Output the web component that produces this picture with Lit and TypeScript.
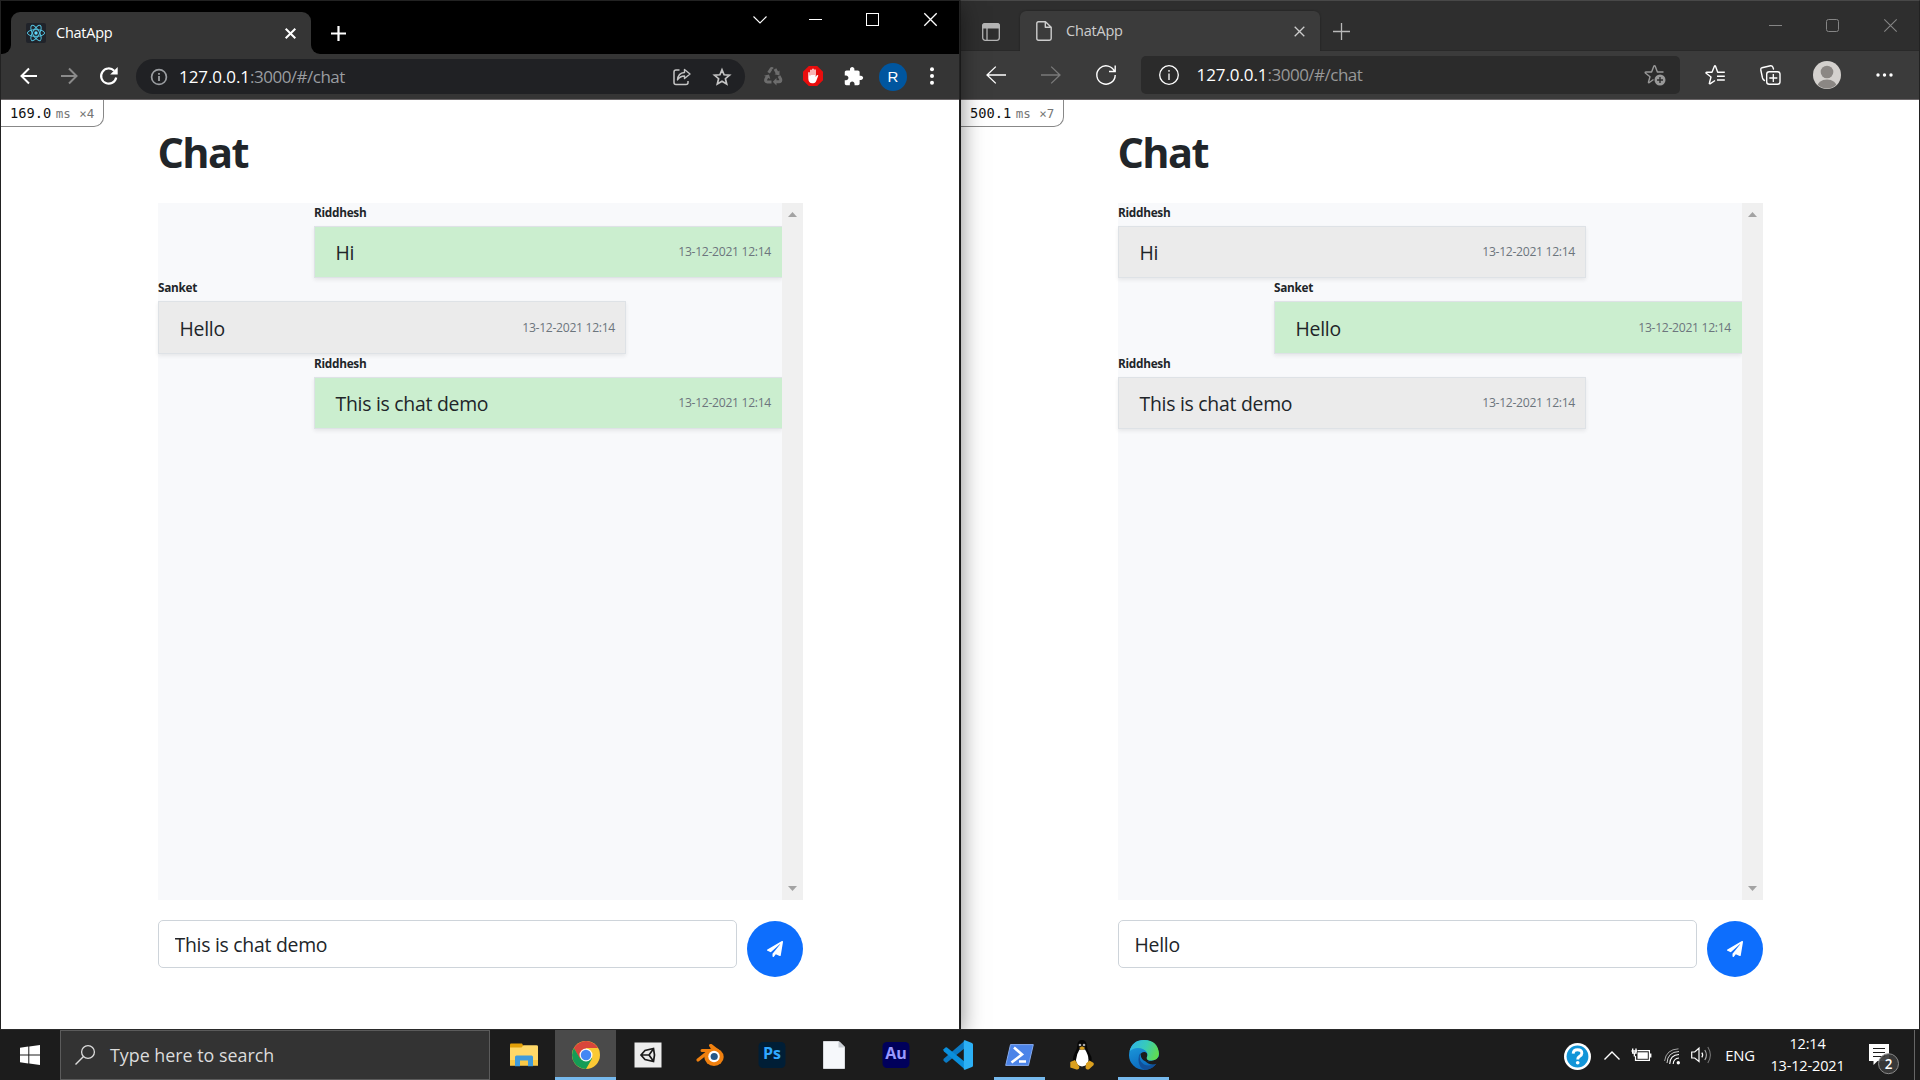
import { LitElement, html, svg, css } from "lit";
import { customElement, property } from "lit/decorators.js";
import { classMap } from "lit/directives/class-map.js";

const icon = (w: number, h: number, body: unknown) =>
  html`<svg width=${w} height=${h} viewBox="0 0 ${w} ${h}" fill="none" stroke="currentColor">${body}</svg>`;

const closeIcon = (s: number, sw: number) =>
  icon(s, s, svg`<path stroke-width=${sw} d="M.7 .7L${s - 0.7} ${s - 0.7}M${s - 0.7} .7L.7 ${s - 0.7}"/>`);
const plusIcon = (s: number, sw: number) =>
  icon(s, s, svg`<path stroke-width=${sw} d="M${s / 2} 0V${s}M0 ${s / 2}H${s}"/>`);

const reactIcon = html`<svg width="20" height="20" viewBox="0 0 20 20">
  <rect width="20" height="20" rx="2" fill="#20232a"/>
  <g fill="none" stroke="#53c1de" stroke-width="1">
    <ellipse cx="10" cy="10" rx="8.6" ry="3.4"/>
    <ellipse cx="10" cy="10" rx="8.6" ry="3.4" transform="rotate(60 10 10)"/>
    <ellipse cx="10" cy="10" rx="8.6" ry="3.4" transform="rotate(120 10 10)"/>
  </g><circle cx="10" cy="10" r="1.7" fill="#61dafb"/></svg>`;

const chromeIcons = {
  back: icon(18, 18, svg`<path stroke-width="2" d="M17 9H2M9 1.5L1.5 9L9 16.5"/>`),
  forward: icon(18, 18, svg`<path stroke-width="2" d="M1 9H16M9 1.5L16.5 9L9 16.5"/>`),
  reload: icon(20, 20, svg`<path stroke-width="2.2" d="M17.2 11.5A7.6 7.6 0 1 1 15.2 4.8"/><path fill="currentColor" stroke="none" d="M18.7 1V8.5H11.2Z"/>`),
  info: icon(18, 18, svg`<circle cx="9" cy="9" r="7.4" stroke-width="1.7"/><path stroke-width="1.8" d="M9 8V13M9 5V6.8"/>`),
  share: icon(18, 18, svg`<path stroke-width="1.5" d="M6.5 2H3Q1 2 1 4V14.500Q1 16.500 3 16.500H13Q15 16.500 15 14.500V13"/><path stroke-width="1.400" stroke-linejoin="round" d="M11.500 1.500L17 6L11.500 10.500V8Q7 8 4.500 12Q5 5 11.500 4.500Z"/>`),
  star: icon(18, 18, svg`<path stroke-width="1.7" d="M9 1.800L11.100 6.800L16.500 7.200L12.400 10.700L13.700 16L9 13.200L4.300 16L5.600 10.700L1.500 7.200L6.900 6.800Z"/>`),
  recycle: icon(20, 20, svg`<g stroke-width="3"><path d="M5.600 6.800L8 3Q8.800 2 9.600 3"/><path d="M12 3L14.200 7"/><path d="M16 10L17.700 13.200Q18.300 15.800 16 15.800H12.500"/><path d="M8.500 16H4.300Q1.700 15.800 3 12.600L4.700 10"/></g><g fill="currentColor" stroke="none"><path d="M16.500 4.500V9.500L11.500 8.200Z"/><path d="M13.500 12V19.500L9.800 15.800Z"/><path d="M1 9.800L6 8.500L7.300 13Z"/></g>`),
  hand: html`<svg width="22" height="22" viewBox="0 0 22 22"><path fill="#e90d0d" d="M6.800 1H15.200L21 6.800V15.200L15.200 21H6.800L1 15.200V6.800Z"/>
    <path fill="#fff" d="M6.300 7.500Q7 6.600 7.700 7.500V10.500H8.300V5Q9 4 9.700 5V10H10.300V4Q11 3.100 11.700 4V10H12.300V4.700Q13 3.800 13.700 4.700V12L14.800 10.300Q15.800 9.500 16.300 10.500L14.600 15Q13.500 18.300 11.300 18.300H10.300Q6.400 18 6.300 13.500Z"/></svg>`,
  puzzle: html`<svg width="21" height="21" viewBox="0 0 24 24"><path fill="#fff" d="M20.500 11H19V7c0-1.100-.9-2-2-2h-4V3.500C13 2.120 11.880 1 10.500 1S8 2.120 8 3.500V5H4c-1.100 0-1.990.9-1.990 2v3.800H3.500c1.490 0 2.700 1.210 2.700 2.700s-1.210 2.700-2.700 2.700H2V20c0 1.100.9 2 2 2h3.800v-1.500c0-1.490 1.210-2.700 2.700-2.700 1.490 0 2.700 1.210 2.700 2.700V22H17c1.100 0 2-.9 2-2v-4h1.500c1.380 0 2.500-1.120 2.500-2.500S21.880 11 20.500 11z"/></svg>`,
  dots: html`<svg width="4" height="18" viewBox="0 0 4 18" fill="#fff"><circle cx="2" cy="2.300" r="2"/><circle cx="2" cy="9" r="2"/><circle cx="2" cy="15.700" r="2"/></svg>`,
};

const edgeIcons = {
  tabs: html`<svg width="18" height="18" viewBox="0 0 18 18" fill="none" stroke="#b4b4b4" stroke-width="1.300"><rect x=".7" y=".7" width="16.600" height="16.600" rx="2.500"/><path d="M5 5V17"/><path fill="#b4b4b4" stroke="none" d="M0 5.500V3Q0 0 3 0H15Q18 0 18 3V5.500Z"/></svg>`,
  page: icon(16, 20, svg`<path stroke-width="1.400" stroke-linejoin="round" d="M2.500 .8H9.500L15.200 6.300V17.500Q15.200 19.200 13.500 19.200H2.500Q.8 19.200 .8 17.500V2.500Q.8 .8 2.500 .8ZM9.300 1V6.300H15"/>`),
  back: icon(20, 18, svg`<path stroke-width="1.300" d="M20 9H1.200M9.800 .6L1 9L9.800 17.400"/>`),
  forward: icon(20, 18, svg`<path stroke-width="1.300" d="M0 9H18.800M10.200 .6L19 9L10.200 17.400"/>`),
  reload: icon(20, 20, svg`<path stroke-width="1.400" d="M18.700 7A9.200 9.200 0 1 0 19.200 10M19.200 .5V6.500H13"/>`),
  info: icon(20, 20, svg`<circle cx="10" cy="10" r="9.300" stroke-width="1.300"/><path stroke-width="1.300" d="M10 8.500V15M10 5V6.800"/>`),
  starPlus: icon(22, 22, svg`<path stroke-width="1.400" stroke-linejoin="round" d="M9.500 15.500L5 18.800Q4.200 19 4.500 18L6 12.700L1.300 9Q.8 8 2 8H7.600L9.800 2.200Q10.500 1 11.200 2.200L13.400 8H19.500"/><circle cx="16" cy="16" r="5.500" fill="currentColor" stroke="none"/><path stroke="#2b2b2b" stroke-width="1.400" d="M16 13V19M13 16H19"/>`),
  starList: icon(20, 20, svg`<path stroke-width="1.400" stroke-linejoin="round" d="M10 15.500L5 18.900Q4 19 4.400 18L6 12L1.200 8.300Q.5 7.200 1.800 7.200H7L9.300 1.400Q10 .2 10.600 1.400L12.700 7.200H19.800M12 11.200H19.800M12 15H19.800"/>`),
  collections: icon(21, 20, svg`<path stroke-width="1.400" stroke-linecap="round" d="M4.500 15.500Q3 14.800 2.500 13L.8 5Q.5 3.200 2 2.700L10.500 .8Q12.300 .6 12.900 2.200L13.500 4"/><rect x="6.700" y="6.700" width="13.300" height="12.600" rx="2.500" stroke-width="1.400"/><path stroke-width="1.300" d="M13.300 9V17M9.300 13H17.300"/>`),
  avatar: html`<svg width="28" height="28" viewBox="0 0 28 28"><clipPath id="av"><circle cx="14" cy="14" r="13.500"/></clipPath><circle cx="14" cy="14" r="14" fill="#d4d1ce"/><g fill="#8b8784" clip-path="url(#av)"><circle cx="14" cy="11" r="6.300"/><ellipse cx="14" cy="26.500" rx="10" ry="8"/></g></svg>`,
  dots: html`<svg width="17" height="4" viewBox="0 0 17 4" fill="#fff"><circle cx="2" cy="2" r="1.700"/><circle cx="8.500" cy="2" r="1.700"/><circle cx="15" cy="2" r="1.700"/></svg>`,
};

const caption = (name: string, sw: number, round = 0) => {
  if (name === "chevron") return icon(14, 8, svg`<path stroke-width="1.100" d="M.5 .5L7 7L13.500 .5"/>`);
  if (name === "min") return icon(13, 1, svg`<path stroke-width="1" d="M0 .5H13"/>`);
  if (name === "max") return icon(13, 13, svg`<rect x=".5" y=".5" width="12" height="12" rx=${round} stroke-width="1"/>`);
  return icon(13, 13, svg`<path stroke-width=${sw} d="M.3 .3L12.700 12.700M12.700 .3L.3 12.700"/>`);
};

const appIcons: Record<string, unknown> = {
  explorer: html`<svg width="28" height="24" viewBox="0 0 28 24"><path fill="#e3a008" d="M0 1.500Q0 .5 1 .5H12L13.500 3V6H0Z"/><path fill="#ffd868" d="M0 4.500H11.500L13.500 2.300H26.500Q28 2.300 28 3.500V22.500H0Z"/><path fill="#f9c846" d="M0 17H28V22.500H0Z"/><path fill="#3f9bdc" d="M5 23.300V14Q5 12.500 6.500 12.500H21.500Q23 12.500 23 14V23.300H18V17.500H10V23.300Z"/></svg>`,
  chrome: html`<svg width="28" height="28" viewBox="0 0 28 28"><circle cx="14" cy="14" r="14" fill="#fbc934"/><path fill="#d9463b" d="M14 14L7.500 17.700L1.900 7A14 14 0 0 1 26.100 7H14Z"/><path fill="#149c56" d="M1.900 7A14 14 0 0 0 14 28L20 17.500L14 14L8 17.500Z"/><circle cx="14" cy="14" r="6.500" fill="#fff" opacity=".95"/><circle cx="14" cy="14" r="5.200" fill="#4487f4"/></svg>`,
  unity: html`<svg width="28" height="26" viewBox="0 0 28 26"><path fill="#ececec" d="M.5 .5H27.500V25.500H.5Z"/><path d="M7 13L11 8.500L19.500 6.500L20.500 13L19.500 19.500L11 17.500ZM15 13H7.500M15 13L19.300 7M15 13L19.300 19" fill="none" stroke="#1a1a1a" stroke-width="1.700"/></svg>`,
  blender: html`<svg width="28" height="24" viewBox="0 0 28 24"><g fill="none" stroke="#f0800f" stroke-linecap="round" stroke-linejoin="round"><path stroke-width="3.200" d="M2 17L12 9"/><path stroke-width="3" d="M6 7.500H18L14.500 2.500"/><path stroke-width="3" d="M15 2.500L22 8"/></g><ellipse cx="18" cy="14" rx="9.700" ry="9" fill="#f0800f"/><circle cx="18" cy="13.500" r="5.700" fill="#fff"/><circle cx="18.200" cy="13.500" r="3.600" fill="#265787"/></svg>`,
  ps: html`<svg width="28" height="28" viewBox="0 0 28 28"><rect x=".5" y="1" width="27" height="26" rx="4.500" fill="#001e36"/><text x="14" y="18" text-anchor="middle" font-family="Open Sans, sans-serif" font-weight="700" font-size="16" fill="#31a8ff">Ps</text></svg>`,
  file: html`<svg width="22" height="28" viewBox="0 0 22 28"><path fill="#f6f8fb" stroke="#d8dade" d="M.5 .5H16L21.500 6V27.500H.5Z"/><path fill="#c9cdd3" d="M15.500 0V6.500H22Z"/></svg>`,
  au: html`<svg width="28" height="28" viewBox="0 0 28 28"><rect x=".5" y="1" width="27" height="26" rx="4.500" fill="#00005b"/><text x="14" y="18" text-anchor="middle" font-family="Open Sans, sans-serif" font-weight="700" font-size="16" fill="#9999ff">Au</text></svg>`,
  vscode: html`<svg width="30" height="30" viewBox="0 0 30 30"><path fill="#0b7ac4" d="M1 18.500L22 .5V8L4 22.500Q3.300 23 2.500 22.500L.6 20.800Q-.2 19.800 1 18.500Z"/><path fill="#0a8fdc" d="M1 11.500L22 29.500V22L4 7.500Q3.300 7 2.500 7.500L.6 9.200Q-.2 10.200 1 11.500Z"/><path fill="#2cb0f5" d="M22 .2L29 3Q30 3.500 30 4.500V25.500Q30 26.500 29 27L22 29.800Q20.500 30 20.800 28.500V1.500Q20.500 0 22 .2Z"/></svg>`,
  powershell: html`<svg width="29" height="22" viewBox="0 0 29 22"><path fill="#4c84e8" stroke="#86abee" stroke-width="1" d="M5.500 .6H28.300L23.500 21.400H.7Z"/><path fill="none" stroke="#fff" stroke-width="2.600" d="M9 3.500L17 10.500L6.500 18.500M14 17.500H21"/></svg>`,
  tux: html`<svg width="24" height="30" viewBox="0 0 24 30"><path fill="#060606" d="M12 0Q16.500 0 16.800 5.500Q17 9.500 20 14Q23 19 20.500 24Q12 28 4 24Q1.500 19 4.500 13.500Q7.500 9 7.300 5.500Q7.500 0 12 0Z"/><path fill="#fff" d="M9.500 9.500H15Q18.500 15 18.500 20Q18.500 25.500 12 26.500Q6 25.500 6 20Q6.500 14 9.500 9.500Z"/><circle cx="10" cy="5" r="1.300" fill="#aaa"/><circle cx="14" cy="5" r="1.300" fill="#aaa"/><path fill="#dba01f" d="M9 8L12 6.300L15.300 8L12 10.200ZM.3 22L5 20L9.500 27Q9 30 6.500 29.500L.3 27.500ZM23.700 23L19.500 20.500L16 23.500L15.500 28Q17 30.500 19.300 29L23.700 25Z"/></svg>`,
  edge: html`<svg width="30" height="30" viewBox="0 0 30 30"><defs>
      <linearGradient id="e1" x1="0" y1=".3" x2="1" y2=".6"><stop offset="0" stop-color="#2fb5e8"/><stop offset=".5" stop-color="#38cbb9"/><stop offset="1" stop-color="#62dd4b"/></linearGradient>
      <linearGradient id="e2" x1="0" y1="0" x2=".4" y2="1"><stop offset="0" stop-color="#1ea3e2"/><stop offset="1" stop-color="#0c69bd"/></linearGradient></defs>
    <circle cx="15" cy="15" r="15" fill="url(#e2)"/>
    <path fill="#11509a" d="M11.500 13Q9 21 15 24.500Q20 27 27.500 23.500Q23 30 15.500 30Q9.500 27 9.500 20Q9.500 15 11.500 13Z"/>
    <path fill="#1c1c1c" d="M30.200 16V22.500L28 23.800Q20 26 16 20.500Q17.500 21.500 22 21Q28 20 30.200 16Z"/>
    <path fill="#1c1c1c" d="M11.500 14Q13 11.500 16 12Q19 13 18.300 16Q17 18.500 19 20Q21 21 17 21.500Q12 20 11.500 14Z"/>
    <path fill="url(#e1)" d="M.5 11.500Q3 0 15 0Q29 0 30 14Q29 20.500 22.500 20.500Q17.500 20.500 17.700 18Q19.500 15.500 18 12.500Q15 8 9 8Q3.500 8 .5 11.500Z"/></svg>`,
};

const trayIcons = {
  help: html`<svg width="27" height="27" viewBox="0 0 28 28"><circle cx="14" cy="14" r="14" fill="#fff"/><circle cx="14" cy="14" r="11.300" fill="#1295d8"/><path fill="none" stroke="#fff" stroke-width="3" d="M9.500 11Q9.700 7 14 7Q18.500 7 18.500 10.500Q18.500 12.500 16 14Q14.200 15.200 14.200 17"/><circle cx="14.200" cy="20.500" r="1.900" fill="#fff"/></svg>`,
  chevron: icon(16, 9, svg`<path stroke-width="1.400" d="M.5 8.500L8 1L15.500 8.500"/>`),
  battery: icon(21, 14, svg`<path stroke-width="1.200" d="M6.500 2.600H18.400V12.400H4.500V8"/><rect x="6.500" y="4.300" width="10.300" height="6.500" fill="currentColor" stroke="none"/><path stroke-width="1.400" d="M19.700 5.500V9.500M1.700 .5V5H5V.5M3.400 5V8.500M.5 3H6"/>`),
  wifi: icon(17, 17, svg`<circle cx="14.300" cy="14.700" r="1.700" fill="currentColor" stroke="none"/><path stroke-width="1.100" d="M9.200 16Q9.500 10.500 15 10"/><path stroke-width="1.100" d="M5.700 16Q6 7 15 6.500"/><path stroke-width="1" opacity=".8" d="M3 15Q3.500 4 15 3.500"/><path stroke-width="1" opacity=".6" d="M.6 13Q2 1.500 14.500 .8"/>`),
  volume: icon(21, 18, svg`<path stroke-width="1.200" d="M.7 6H3.700L8 2.200V15.500L3.700 12H.7Z"/><path stroke-width="1.200" d="M10.800 6.700Q12.500 9 10.800 11.300"/><path stroke-width="1.100" opacity=".65" d="M13.800 4Q17 9 13.800 14"/><path stroke-width="1.100" opacity=".4" d="M16.800 1Q22 9 16.800 17"/>`),
};

const base = css`
  * { box-sizing: border-box; }
  svg { display: block; flex: none; overflow: visible; }
`;

interface Message { from: string; text: string; mine: boolean; }

@customElement("chat-page")
class ChatPage extends LitElement {
  @property({ attribute: false }) messages: Message[] = [];
  @property() draft = "";
  @property() timing = "";
  @property() count = "";

  static styles = [base, css`
    :host { display: block; flex: 1; background: #fff; color: #212529; overflow: hidden; }
    .profiler { width: 103px; height: 27px; border: 1px solid #888; border-width: 0 1px 1px 0; border-radius: 0 0 10px 0;
      padding-left: 9px; display: flex; align-items: baseline; line-height: 26px; font-family: "DejaVu Sans Mono", monospace; color: #111; font-size: 13.700px; }
    .small { font-size: 12.500px; color: #757575; margin-left: 4.500px; }
    .times { margin-left: 8.500px; }
    .column { width: 645px; margin-left: 157px; }
    h1 { margin: 0 0 0 -.5px; height: 76px; line-height: 50px; font-size: 41.500px; font-weight: 700; letter-spacing: -1.600px; }
    .board { height: 697px; display: flex; background: #f8f9fb; }
    .list { flex: 1; display: flex; flex-direction: column; }
    .bar { width: 21px; background: #f0f0f0; display: flex; flex-direction: column; align-items: center; justify-content: space-between; padding: 9px 0; color: #a3a3a3; }
    .entry { width: 468px; }
    .mine { align-self: flex-end; }
    .name { height: 23px; line-height: 18px; font-size: 11.800px; font-weight: 700; letter-spacing: -.28px; }
    .bubble { height: 52.4px; padding: 1px 10px 0 20.500px; border: 1px solid #dee2e6; background: #ebebeb; box-shadow: 0 2px 4px rgba(0,0,0,.075);
      display: flex; justify-content: space-between; align-items: center; font-size: 19.400px; letter-spacing: -.26px; }
    .mine .bubble { background: #cbeecf; border-right: 0; padding-right: 11px; }
    .time { font-size: 12.200px; letter-spacing: -.32px; color: #6c757d; padding-bottom: 2px; }
    .compose { display: flex; gap: 10px; margin-top: 20px; }
    .field { flex: 1; min-width: 0; height: 48px; border: 1px solid #ced4da; border-radius: 5px; padding: 1px 15px 0 15.500px; font: 19.400px "Open Sans", sans-serif; letter-spacing: -.26px; color: #212529; background: #fff; outline: 0; }
    .send { width: 56px; height: 56px; margin-top: 1px; padding: 0; border: 0; border-radius: 50%; background: #0d6efd; display: flex; align-items: center; justify-content: center; }
  `];

  render() {
    return html`
      <div class="profiler">${this.timing}<span class="small">ms</span><span class="small times">${this.count}</span></div>
      <div class="column">
        <h1>Chat</h1>
        <div class="board">
          <div class="list">
            ${this.messages.map((m) => html`
              <div class=${classMap({ entry: true, mine: m.mine })}>
                <div class="name">${m.from}</div>
                <div class="bubble"><span>${m.text}</span><span class="time">13-12-2021 12:14</span></div>
              </div>`)}
          </div>
          <div class="bar">
            <svg width="9" height="5" viewBox="0 0 9 5" fill="currentColor"><path d="M0 5L4.500 0L9 5Z"/></svg>
            <svg width="9" height="5" viewBox="0 0 9 5" fill="currentColor"><path d="M0 0H9L4.500 5Z"/></svg>
          </div>
        </div>
        <div class="compose">
          <input class="field" .value=${this.draft}>
          <button class="send"><svg width="16" height="16" viewBox="0 0 512 512" fill="#fff"><path d="M476 3.200L12.500 270.600c-18.100 10.400-15.800 35.600 2.200 43.200L121 358.400l287.300-253.200c5.500-4.900 13.300 2.600 8.600 8.300L176 407v80.500c0 23.600 28.500 32.900 42.500 15.800L282 426l124.600 52.200c14.200 6 30.400-2.900 33-18.200l72-432C515 7.800 493.300-6.800 476 3.200z"/></svg></button>
        </div>
      </div>`;
  }
}

@customElement("chrome-frame")
class ChromeFrame extends LitElement {
  static styles = [base, css`
    :host { display: block; height: 99px; color: #fff; background: #353535; border-bottom: 1px solid #6a6668; }
    .strip { height: 53px; background: #000; display: flex; }
    .foot { width: 10px; background: #353535; display: flex; }
    .foot i { flex: 1; background: #000; }
    .left i { border-bottom-right-radius: 9px; }
    .right i { border-bottom-left-radius: 9px; }
    .tab { width: 300px; margin-top: 11px; height: 42px; background: #353535; border-radius: 9px 9px 0 0; display: flex; align-items: center; padding: 0 15px; font-size: 14.500px; letter-spacing: -.25px; }
    .title { flex: 1; padding: 0 0 2px 10px; }
    .plus { width: 30px; padding: 11px 0 0 4px; display: flex; align-items: center; justify-content: center; }
    .captions { margin-left: auto; display: flex; height: 37px; }
    .slot { width: 58px; display: flex; align-items: center; justify-content: center; }
    .chevron { width: 53px; }
    .min { width: 58px; }
    .max { width: 57px; }
    .tools { display: flex; height: 45px; align-items: center; padding: 0 0 1px 8px; }
    .tool { width: 40px; display: flex; justify-content: center; }
    .dim { color: #8a8a8a; }
    .address { width: 609px; height: 35px; margin: 1px 8px 0 7px; border-radius: 18px; background: #202124; display: flex; align-items: center; padding: 0 3px 0 13.500px; font-size: 17px; color: #9a9da1; }
    .url { flex: 1; padding-left: 11.500px; letter-spacing: -.5px; }
    .host { color: #fff; letter-spacing: -.08px; }
    .grey { color: #c4c4c4; }
    .avatar { width: 28px; height: 28px; margin: 1px 6px 0; border-radius: 50%; background: #00569f; display: flex; align-items: center; justify-content: center; font: 15px "Liberation Sans", sans-serif; }
    .faint { color: #6d6d6d; }
    .menu { width: 38px; }
  `];
  render() {
    return html`
      <div class="strip">
        <div class="foot left"><i></i></div>
        <div class="tab">${reactIcon}<span class="title">ChatApp</span>${closeIcon(11, 2)}</div>
        <div class="foot right"><i></i></div>
        <div class="plus">${plusIcon(15, 2.2)}</div>
        <div class="captions">
          ${["chevron", "min", "max", "close"].map((c) => html`<span class="slot ${c}">${caption(c, 1.3)}</span>`)}
        </div>
      </div>
      <div class="tools">
        <span class="tool">${chromeIcons.back}</span><span class="tool dim">${chromeIcons.forward}</span><span class="tool">${chromeIcons.reload}</span>
        <div class="address">${chromeIcons.info}<span class="url"><span class="host">127.0.0.1</span>:3000/#/chat</span>
          <span class="tool grey">${chromeIcons.share}</span><span class="tool grey">${chromeIcons.star}</span></div>
        <span class="tool faint">${chromeIcons.recycle}</span><span class="tool">${chromeIcons.hand}</span><span class="tool">${chromeIcons.puzzle}</span>
        <span class="avatar">R</span><span class="tool menu">${chromeIcons.dots}</span>
      </div>`;
  }
}

@customElement("edge-frame")
class EdgeFrame extends LitElement {
  static styles = [base, css`
    :host { display: block; height: 99px; color: #fff; background: #3b3b3b; border-bottom: 1px solid #6a6668; }
    .strip { height: 50px; background: #2e2e2e; display: flex; box-shadow: inset 0 -1px #292929; }
    .actions { width: 59px; display: flex; align-items: center; justify-content: center; padding: 11px 0 0 1px; }
    .tab { width: 300px; margin-top: 10px; height: 40px; background: #3b3b3b; border-radius: 6px 6px 0 0; box-shadow: 0 0 2px #1e1e1e; clip-path: inset(-3px -3px 0); display: flex; align-items: center; padding: 0 15px 0 16px; font-size: 14.500px; letter-spacing: -.2px; color: #cdcdcd; }
    .title { flex: 1; padding: 0 0 2px 14px; }
    .plus { width: 42px; display: flex; align-items: center; justify-content: center; padding-top: 11px; color: #b8b8b8; }
    .captions { margin-left: auto; display: flex; height: 49px; color: #858585; }
    .slot { width: 58px; display: flex; align-items: center; justify-content: center; }
    .max { width: 57px; }
    .tools { display: flex; height: 48px; align-items: center; padding-left: 7px; }
    .tool { width: 55px; display: flex; justify-content: center; }
    .dim { color: #7a7a7a; }
    .address { width: 539px; height: 38px; margin: 0 7.500px 0 8px; border-radius: 5px; background: #2b2b2b; display: flex; align-items: center; padding: 0 14px 0 17.500px; font-size: 17px; color: #989898; }
    .url { flex: 1; padding: 0 0 2px 18px; letter-spacing: -.5px; }
    .host, .info { color: #fff; }
    .host { letter-spacing: -.08px; }
    .person { width: 59px; }
    .more { width: 56px; }
  `];
  render() {
    return html`
      <div class="strip">
        <span class="actions">${edgeIcons.tabs}</span>
        <div class="tab">${edgeIcons.page}<span class="title">ChatApp</span>${closeIcon(11, 1.3)}</div>
        <span class="plus">${plusIcon(17, 1.3)}</span>
        <div class="captions">${["min", "max", "close"].map((c) => html`<span class="slot ${c}">${caption(c, 1.1, 2)}</span>`)}</div>
      </div>
      <div class="tools">
        <span class="tool">${edgeIcons.back}</span><span class="tool dim">${edgeIcons.forward}</span><span class="tool">${edgeIcons.reload}</span>
        <div class="address"><span class="info">${edgeIcons.info}</span><span class="url"><span class="host">127.0.0.1</span>:3000/#/chat</span>${edgeIcons.starPlus}</div>
        <span class="tool">${edgeIcons.starList}</span><span class="tool">${edgeIcons.collections}</span>
        <span class="tool person">${edgeIcons.avatar}</span><span class="tool more">${edgeIcons.dots}</span>
      </div>`;
  }
}

@customElement("task-bar")
class TaskBar extends LitElement {
  static styles = [base, css`
    :host { display: flex; height: 51px; background: #1c1c1c; border-top: 1px solid #2a2a2a; color: #fff; }
    .start { width: 60px; display: flex; align-items: center; justify-content: center; }
    .search { width: 430px; border: 1px solid #5b5b5b; background: #333; display: flex; align-items: center; padding-left: 14px; font-size: 17.850px; color: #dcdcdc; margin-right: 3px; }
    .label { padding-left: 15px; }
    .app { width: 61px; margin-right: 1px; display: flex; flex-direction: column; align-items: center; }
    .art { flex: 1; display: flex; align-items: center; padding-top: 2px; }
    .line { height: 3px; width: 51px; }
    .open .line { background: #76b9ed; }
    .active { background: #4a4a4a; }
    .active .line { width: 61px; }
    .tray { margin-left: auto; display: flex; align-items: center; }
    .cell { display: flex; justify-content: center; }
    .help { width: 42px; padding-top: 3px; }
    .up { width: 27px; }
    .power { width: 33px; }
    .net { width: 28px; padding-top: 3px; }
    .vol { width: 31px; }
    .lang { width: 46px; font-size: 14.8px; letter-spacing: -.2px; padding-bottom: 1px; }
    .clock { width: 89px; text-align: center; font-size: 14.500px; letter-spacing: -.15px; line-height: 22.500px; }
    .notes { width: 62px; display: flex; justify-content: center; padding: 7px 0 0 2px; }
    .desk { width: 6px; align-self: stretch; border-left: 1px solid #666; }
  `];
  render() {
    const apps = Object.keys(appIcons);
    return html`
      <div class="start"><svg width="20" height="20" viewBox="0 0 20 20" fill="#fff"><path d="M0 2.800L8.300 1.600V9.500H0ZM9.300 1.500L20 0V9.500H9.300ZM0 10.500H8.300V18.400L0 17.200ZM9.300 10.500H20V20L9.300 18.500Z"/></svg></div>
      <div class="search">${icon(20, 20, svg`<circle cx="13" cy="7" r="6.400" stroke-width="1.300"/><path stroke-width="1.400" d="M8.500 11.500L.5 19.500"/>`)}<span class="label">Type here to search</span></div>
      ${apps.map((a) => html`<div class=${classMap({ app: true, active: a === "chrome", open: ["chrome", "powershell", "edge"].includes(a) })}>
        <div class="art">${appIcons[a]}</div><div class="line"></div></div>`)}
      <div class="tray">
        <span class="cell help">${trayIcons.help}</span><span class="cell up">${trayIcons.chevron}</span><span class="cell power">${trayIcons.battery}</span>
        <span class="cell net">${trayIcons.wifi}</span><span class="cell vol">${trayIcons.volume}</span><span class="cell lang">ENG</span>
        <div class="clock">12:14<br>13-12-2021</div>
        <div class="notes"><svg width="30" height="30" viewBox="0 0 30 30">
          <path fill="#fff" d="M0 0H20V17H8.500L4.500 21V17H0Z"/><path stroke="#1c1c1c" stroke-width="1.200" d="M4 4.500H16M4 8.500H16M4 12.500H16"/>
          <circle cx="19.500" cy="19.700" r="10" fill="#3a3a3a" fill-opacity=".93" stroke="#8a8a8a" stroke-width="1"/>
          <text x="19.500" y="24.600" text-anchor="middle" fill="#fff" font-family="Open Sans, sans-serif" font-size="13.500" font-weight="600">2</text></svg></div>
        <div class="desk"></div>
      </div>`;
  }
}

@customElement("app-root")
class AppRoot extends LitElement {
  static styles = [base, css`
    :host { display: flex; flex-direction: column; width: 1920px; height: 1080px; overflow: hidden; font-family: "Open Sans", "Noto Sans", sans-serif; background: #1c1c1c; }
    .desktop { height: 1029px; display: flex; overflow: hidden; }
    .window { width: 960px; height: 1029px; border: 1px solid #222; border-bottom: 0; display: flex; flex-direction: column; }
    .front { position: relative; z-index: 1; box-shadow: 0 6px 22px rgba(0,0,0,.5); }
    .rear { border-top-color: #484848; }
  `];
  render() {
    const texts = [
      { from: "Riddhesh", text: "Hi" },
      { from: "Sanket", text: "Hello" },
      { from: "Riddhesh", text: "This is chat demo" },
    ];
    const view = (user: string) => texts.map((t) => ({ ...t, mine: t.from === user }));
    return html`
      <div class="desktop">
        <div class="window front"><chrome-frame></chrome-frame>
          <chat-page .messages=${view("Riddhesh")} draft="This is chat demo" timing="169.0" count="×4"></chat-page></div>
        <div class="window rear"><edge-frame></edge-frame>
          <chat-page .messages=${view("Sanket")} draft="Hello" timing="500.1" count="×7"></chat-page></div>
      </div>
      <task-bar></task-bar>`;
  }
}
